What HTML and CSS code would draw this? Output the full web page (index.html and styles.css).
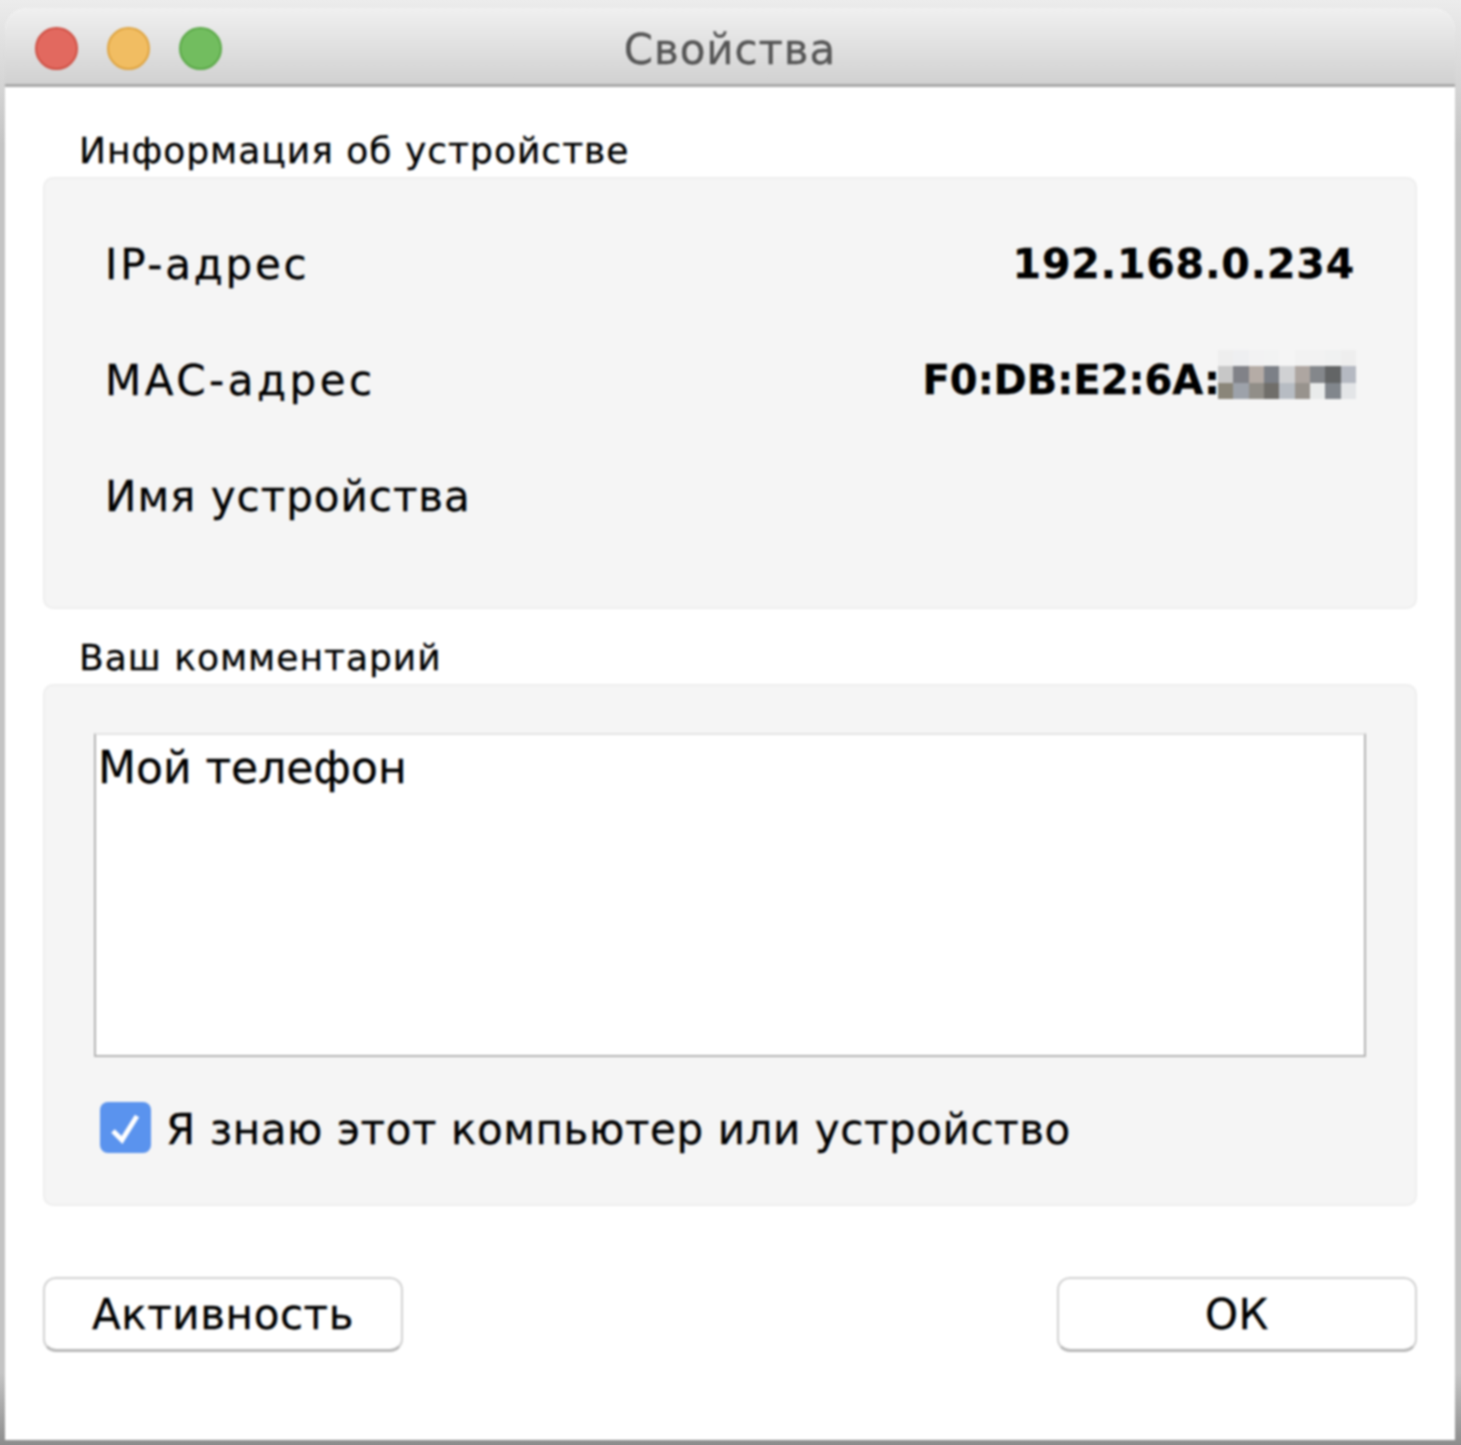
FILE: index.html
```html
<!DOCTYPE html>
<html lang="ru">
<head>
<meta charset="UTF-8" />
<title>Свойства</title>
<link rel="stylesheet" href="styles.css">
</head>
<body>

<div class="window">
  <div class="titlebar">
    <span class="light red"></span>
    <span class="light yellow"></span>
    <span class="light green"></span>
    <span class="title">Свойства</span>
  </div>

  <div class="content">
    <div class="legend">Информация об устройстве</div>
    <div class="panel info">
      <div class="row">
        <span class="ip-label">IP-адрес</span>
        <b class="ip">192.168.0.234</b>
      </div>
      <div class="row">
        <span class="mac-label">MAC-адрес</span>
        <b class="mac">F0:DB:E2:6A:
          <svg class="pixels" width="138" height="49" viewBox="0 0 9 3" preserveAspectRatio="none" shape-rendering="crispEdges">
            <rect x="0" y="0" width="1" height="1" fill="#eeeeee"/><rect x="1" y="0" width="1" height="1" fill="#eeeff1"/><rect x="2" y="0" width="1" height="1" fill="#f2f2f3"/><rect x="3" y="0" width="1" height="1" fill="#f2f3f3"/><rect x="4" y="0" width="1" height="1" fill="#f5f5f5"/><rect x="5" y="0" width="1" height="1" fill="#f2f2f2"/><rect x="6" y="0" width="1" height="1" fill="#f2f2f2"/><rect x="7" y="0" width="1" height="1" fill="#f0f1f1"/><rect x="8" y="0" width="1" height="1" fill="#eeeeee"/>
            <rect x="0" y="1" width="1" height="1" fill="#c7c7c7"/><rect x="1" y="1" width="1" height="1" fill="#818288"/><rect x="2" y="1" width="1" height="1" fill="#b5aca6"/><rect x="3" y="1" width="1" height="1" fill="#7c8087"/><rect x="4" y="1" width="1" height="1" fill="#d0d1d3"/><rect x="5" y="1" width="1" height="1" fill="#aea6a1"/><rect x="6" y="1" width="1" height="1" fill="#84878b"/><rect x="7" y="1" width="1" height="1" fill="#636566"/><rect x="8" y="1" width="1" height="1" fill="#b5b9c2"/>
            <rect x="0" y="2" width="1" height="1" fill="#8a8679"/><rect x="1" y="2" width="1" height="1" fill="#9da2aa"/><rect x="2" y="2" width="1" height="1" fill="#918e88"/><rect x="3" y="2" width="1" height="1" fill="#706e6a"/><rect x="4" y="2" width="1" height="1" fill="#b7bcc3"/><rect x="5" y="2" width="1" height="1" fill="#98938d"/><rect x="6" y="2" width="1" height="1" fill="#e9ebeb"/><rect x="7" y="2" width="1" height="1" fill="#81868c"/><rect x="8" y="2" width="1" height="1" fill="#e3e5e7"/>
          </svg>
        </b>
      </div>
      <div class="row">
        <span>Имя устройства</span>
      </div>
    </div>

    <div class="legend second">Ваш комментарий</div>
    <div class="panel comment">
      <div class="textbox">Мой телефон</div>
      <div class="check-row">
        <span class="checkbox">
          <svg width="32" height="32" viewBox="0 0 32 32"><path d="M3 19 L12 28 L27 4" fill="none" stroke="#fff" stroke-width="5"/></svg>
        </span>
        <span class="check-text">Я знаю этот компьютер или устройство</span>
      </div>
    </div>

    <div class="buttons">
      <button>Активность</button>
      <button>ОК</button>
    </div>
  </div>
</div>

</body>
</html>
```

FILE: styles.css
```css
html, body { height: 100%; }
body {
  margin: 0;
  padding: 8px 6px 5px 5px;
  box-sizing: border-box;
  background: linear-gradient(#ececec, #c4c4c4 10%, #c4c4c4 95%, #8c8c8c);
  font-family: "DejaVu Sans", sans-serif;
  color: #000;
  -webkit-text-stroke: 0.3px;
  overflow: hidden;
}
.window {
  height: 100%;
  background: #fff;
  border-radius: 22px 22px 0 0;
  display: flex;
  flex-direction: column;
  filter: blur(1px);
}

.titlebar {
  height: 79px;
  flex: none;
  box-sizing: border-box;
  display: flex;
  align-items: center;
  gap: 29px;
  padding: 0 0 0 30px;
  border-bottom: 3px solid #a9a9a9;
  border-radius: 22px 22px 0 0;
  background: linear-gradient(#f0f0f0, #d1d1d1);
  position: relative;
}
.light {
  width: 43px;
  height: 43px;
  border-radius: 50%;
  box-sizing: border-box;
  border: 2px solid;
  margin-top: 4px;
}
.red { background: #e2695f; border-color: #cf5044; }
.yellow { background: #f1bd62; border-color: #dfa440; }
.green { background: #72bd5f; border-color: #5aa847; }
.title {
  position: absolute;
  left: 0;
  right: 0;
  top: 17px;
  text-align: center;
  font-size: 42px;
  line-height: 50px;
  letter-spacing: 0.9px;
  color: #555;
}

.content {
  padding: 0 38px;
  flex: 1;
}
.legend {
  margin: 41px 0 0 36px;
  height: 49px;
  font-size: 36px;
  line-height: 45px;
  letter-spacing: 1px;
}
.legend.second { margin-top: 25px; height: 50px; line-height: 47px; }

.panel {
  background: #f5f5f5;
  border: 2px solid #eeeeee;
  border-radius: 10px;
  box-sizing: border-box;
}
.info {
  height: 432px;
  padding: 27px 60px 0 60px;
}
.row {
  height: 116px;
  display: flex;
  justify-content: space-between;
  align-items: center;
  font-size: 42px;
  letter-spacing: 1px;
}
.ip-label { letter-spacing: 2.75px; }
.mac-label { letter-spacing: 3.5px; }
.row b { font-weight: bold; }
.ip { font-size: 41px; letter-spacing: 0.8px; }
.mac { display: flex; align-items: center; white-space: nowrap; font-size: 40px; letter-spacing: 0; }
.pixels { display: block; margin-left: -2px; margin-top: -12px; margin-right: -1px; }

.comment {
  height: 522px;
  padding: 47px 49px 0 49px;
}
.textbox {
  height: 324px;
  box-sizing: border-box;
  background: #fff;
  border: 2px solid #b4b4b4;
  border-top-color: #e4e4e4;
  padding: 8px 2px;
  font-size: 44px;
  line-height: 50px;
}
.check-row {
  display: flex;
  align-items: center;
  gap: 15px;
  margin: 43px 0 0 6px;
  font-size: 42px;
  line-height: 50px;
  letter-spacing: 0.6px;
}
.check-text { padding-top: 5px; }
.checkbox {
  width: 51px;
  height: 51px;
  flex: none;
  background: #5a93ee;
  border-radius: 8px;
  display: flex;
  align-items: center;
  justify-content: center;
}

.buttons {
  display: flex;
  justify-content: space-between;
  margin-top: 71px;
}
.buttons button {
  width: 360px;
  height: 75px;
  background: #fff;
  border: 2px solid #d2d2d2;
  border-bottom: 3px solid #b8b8b8;
  border-radius: 13px;
  font-family: inherit;
  font-size: 42px;
  letter-spacing: 0.6px;
  color: #000;
  padding: 0;
}
```
